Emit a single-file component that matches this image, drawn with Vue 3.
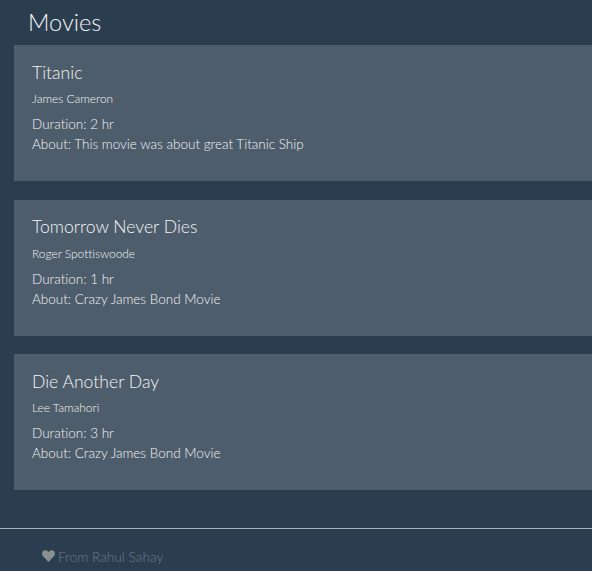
<script setup>
import { ref } from 'vue';

const movies = ref([
  { id: 1, title: 'Titanic', director: 'James Cameron', duration: '2 hr', about: 'This movie was about great Titanic Ship' },
  { id: 2, title: 'Tomorrow Never Dies', director: 'Roger Spottiswoode', duration: '1 hr', about: 'Crazy James Bond Movie' },
  { id: 3, title: 'Die Another Day', director: 'Lee Tamahori', duration: '3 hr', about: 'Crazy James Bond Movie' },
]);
</script>

<template>
  <div class="page">
    <h2 class="heading">Movies</h2>
    <div class="list">
      <div v-for="movie in movies" :key="movie.id" class="movie">
        <h4 class="title">{{ movie.title }}</h4>
        <p class="director">{{ movie.director }}</p>
        <p class="info">Duration: {{ movie.duration }}</p>
        <p class="info">About: {{ movie.about }}</p>
      </div>
    </div>
    <hr class="rule" />
    <footer class="footer">
      <svg class="heart" viewBox="0 0 24 22" width="13" height="12">
        <path d="M12 22 2 11.5C-.7 8.6-.6 4.2 2 1.8 4.700-.6 8.900-.3 12 3.600 15.100-.3 19.300-.6 22 1.800c2.600 2.400 2.700 6.800 0 9.700z" />
      </svg>
      <span>From Rahul Sahay</span>
    </footer>
  </div>
</template>

<style>
html, body {
  margin: 0;
  background-color: #2b3e50;
}
</style>

<style scoped>
.page {
  height: 571px;
  overflow: hidden;
  background-color: #2b3e50;
  color: #f4f4f4;
  font-family: 'Lato', 'Helvetica Neue', Arial, sans-serif;
  font-variant-ligatures: none;
}

.heading {
  margin: 0;
  padding: 7px 0 0 28px;
  height: 45px;
  font-size: 23.6px;
  line-height: 31px;
  font-weight: 300;
  box-sizing: border-box;
}

.list {
  display: flex;
  flex-direction: column;
  gap: 18.5px;
  margin-left: 14px;
}

.movie {
  height: 136px;
  box-sizing: border-box;
  padding: 17.500px 18px;
  background-color: #4e5d6c;
}

.title {
  margin: 0;
  font-size: 17.6px;
  line-height: 20px;
  font-weight: 300;
}

.director {
  margin: 7.500px 0 7px;
  font-size: 11.9px;
  line-height: 17px;
  font-weight: 300;
}

.info {
  margin: 0;
  font-size: 13.5px;
  line-height: 20px;
  font-weight: 300;
}

.rule {
  margin: 37.500px 0 0;
  border: 0;
  border-top: 1px solid #a9b2ba;
}

.footer {
  display: flex;
  align-items: center;
  gap: 3px;
  padding: 19px 0 0 42px;
  font-size: 13.7px;
  line-height: 17px;
  font-weight: 300;
  color: #6a7b8b;
}

.heart {
  fill: #8a8f90;
}
</style>
